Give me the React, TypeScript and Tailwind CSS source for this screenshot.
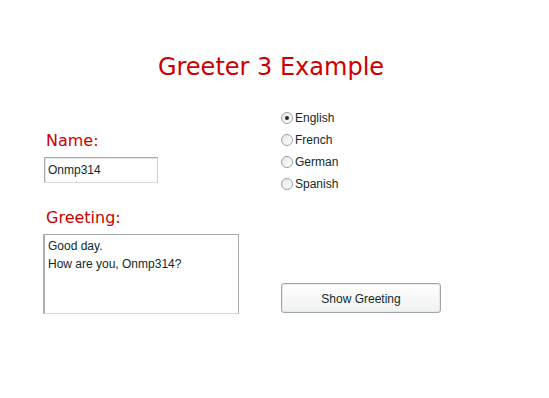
import { useState } from "react";

const languages = ["English", "French", "German", "Spanish"];

const Radio = ({
  label,
  checked,
  onSelect,
}: {
  label: string;
  checked: boolean;
  onSelect: () => void;
}) => (
  <button
    type="button"
    onClick={onSelect}
    className="flex items-center h-[22px] gap-[2px] text-left"
  >
    <span className="w-[12px] h-[12px] rounded-full border border-[#9ba3a3] bg-gradient-to-br from-[#e4e7e7] to-white flex items-center justify-center">
      {checked && <span className="w-[4px] h-[4px] rounded-full bg-[#1f2a2a]" />}
    </span>
    <span className="text-[12px] leading-[14px] text-[#102a2a]">{label}</span>
  </button>
);

export default function App() {
  const [lang, setLang] = useState("English");
  const [name, setName] = useState("Onmp314");

  return (
    <div className="w-[549px] h-[398px] bg-white font-['Liberation_Sans',Arial,sans-serif] text-[12px] text-[#102a2a]">
      <h1 className="pt-[53px] pr-[7px] text-center font-['DejaVu_Sans',Verdana,sans-serif] text-[24px] leading-[28px] text-[#cc0000]">
        Greeter 3 Example
      </h1>

      <div className="flex mt-[26px]">
        <div className="ml-[43px] w-[196px] pt-[24px]">
          <div className="pl-[3px] font-['DejaVu_Sans',Verdana,sans-serif] text-[16px] leading-[20px] text-[#cc0000]">
            Name:
          </div>
          <input
            value={name}
            onChange={(e) => setName(e.target.value)}
            className="block mt-[6px] ml-[1px] w-[114px] h-[26px] px-[3px] border border-[#a3abab] border-b-[#d5d9d9] border-r-[#c8cdcd] shadow-[inset_1px_1px_0_#e4e7e7] text-[12px] text-[#102a2a] outline-none"
          />
          <div className="mt-[25px] pl-[3px] font-['DejaVu_Sans',Verdana,sans-serif] text-[16px] leading-[20px] text-[#cc0000]">
            Greeting:
          </div>
          <textarea
            readOnly
            value={`Good day.\nHow are you, ${name}?`}
            className="block mt-[6px] w-[196px] h-[80px] pl-[3px] pt-[2px] border border-[#a3abab] border-l-2 border-l-[#a9b0b0] border-b-[#d5d9d9] resize-none text-[12px] leading-[18px] text-[#102a2a] outline-none"
          />
        </div>

        <div className="ml-[42px] flex flex-col">
          {languages.map((l) => (
            <Radio key={l} label={l} checked={lang === l} onSelect={() => setLang(l)} />
          ))}
          <button
            type="button"
            className="mt-[88px] w-[160px] h-[30px] pt-[1px] rounded-[3px] border border-[#9ea6a6] shadow-[inset_0_0_0_1px_#e6e9e9] bg-gradient-to-b from-white to-[#f0f1f1] text-[12px] text-[#102a2a]"
          >
            Show Greeting
          </button>
        </div>
      </div>
    </div>
  );
}
